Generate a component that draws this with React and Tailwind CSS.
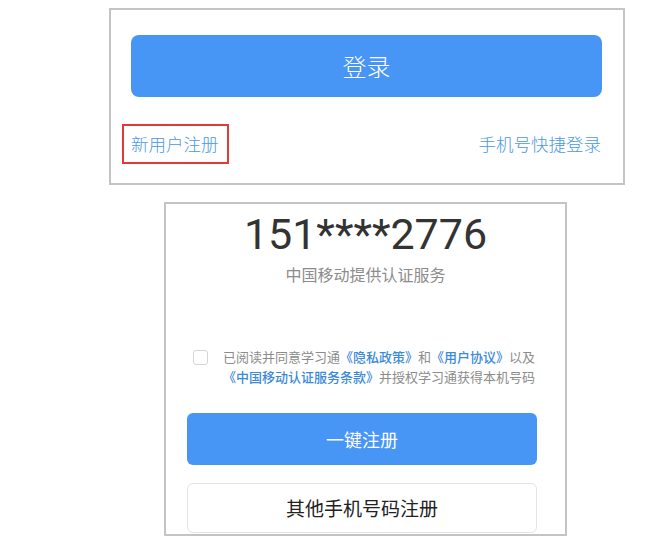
import React from 'react'

const cjk = { fontFamily: '"Noto Sans CJK SC", "Noto Sans", sans-serif' }

const LoginPanel = () => (
  <div className="ml-[109px] mt-[8px] w-[516px] h-[177px] border-2 border-[#c4c4c4] pl-[20px] pr-[21px] pt-[25px]">
    <button className="w-full h-[62px] rounded-[8px] bg-[#4795f4] text-white text-[24px] font-light flex items-center justify-center">
      登录
    </button>
    <div className="mt-[27px] flex items-center justify-between">
      <span className="-ml-[9px] h-[40px] pl-[7px] pr-[8px] flex items-center border-2 border-[#e53935] text-[17.5px] font-light text-[#4a98e6]">
        新用户注册
      </span>
      <span className="mr-[1px] text-[17.5px] font-light text-[#4a98e6]">手机号快捷登录</span>
    </div>
  </div>
)

const RegisterPanel = () => (
  <div className="ml-[164px] mt-[17px] w-[403px] h-[334px] border-2 border-[#c4c4c4] overflow-hidden flex flex-col">
    <div
      className="mt-[9px] text-center text-[43px] leading-none text-[#333333]"
      style={{ fontFamily: 'Roboto, "Liberation Sans", sans-serif' }}
    >
      151****2776
    </div>
    <div className="mt-[6px] text-center text-[16px] leading-[24px] text-[#8c8c8c]">中国移动提供认证服务</div>

    <div className="mt-[61px] flex pl-[27px]">
      <span className="mt-[3px] w-[15px] h-[15px] rounded-[3px] border border-[#d4d4d4] bg-white shrink-0" />
      <p className="ml-[15px] text-[13px] leading-[20px] text-[#8c8c8c] whitespace-nowrap">
        已阅读并同意学习通<span className="text-[#3a8ad8] font-medium">《隐私政策》</span>和<span className="text-[#3a8ad8] font-medium">《用户协议》</span>以及
        <br />
        <span className="text-[#3a8ad8] font-medium">《中国移动认证服务条款》</span>并授权学习通获得本机号码
      </p>
    </div>

    <button className="mt-[26px] ml-[21px] w-[350px] h-[52px] rounded-[6px] bg-[#4795f4] text-white text-[18px] flex items-center justify-center">
      一键注册
    </button>
    <button className="mt-[18px] ml-[21px] w-[350px] h-[50px] rounded-[6px] border border-[#e4e4e4] bg-white text-[19px] text-[#222222] flex items-center justify-center">
      其他手机号码注册
    </button>
  </div>
)

export default function App() {
  return (
    <div className="w-[672px] h-[559px] bg-white overflow-hidden" style={cjk}>
      <LoginPanel />
      <RegisterPanel />
    </div>
  )
}
